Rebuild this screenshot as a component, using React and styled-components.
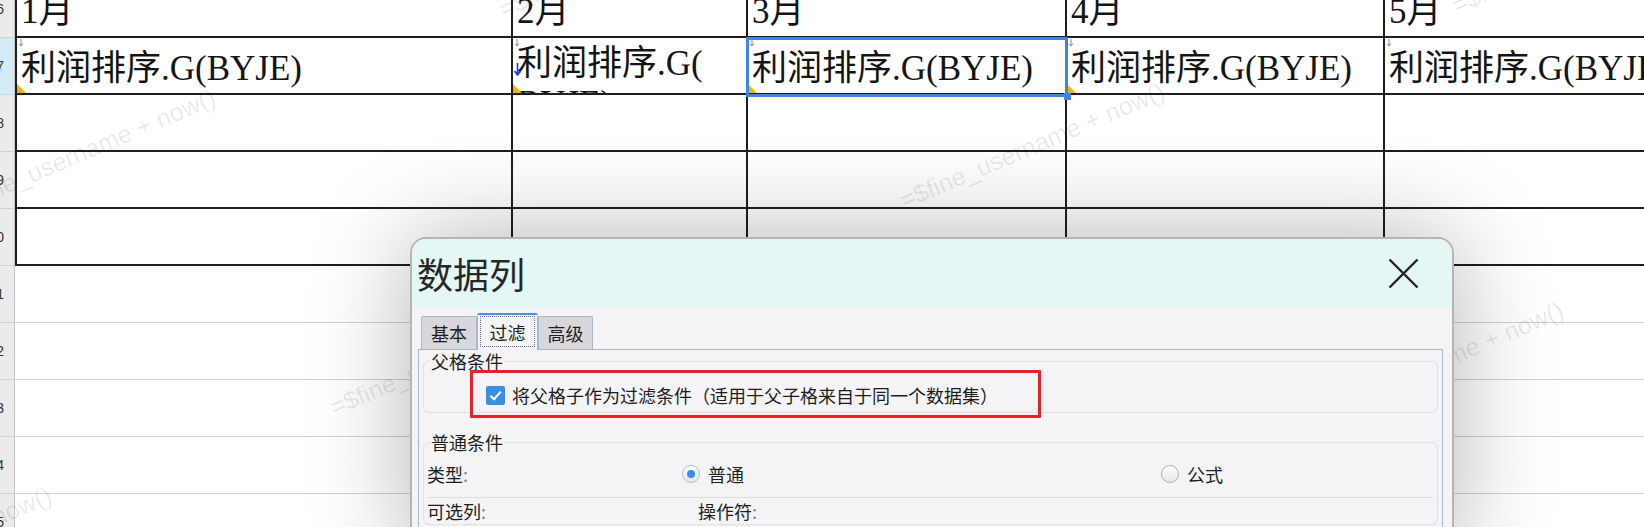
import React from 'react';
import styled, { createGlobalStyle, css } from 'styled-components';

const GlobalStyle = createGlobalStyle`
  html, body { margin: 0; padding: 0; background: #fff; }
  body { overflow: hidden; font-family: "Noto Sans CJK SC", sans-serif; }
  *, *::before, *::after { box-sizing: border-box; }
`;

const Screen = styled.div`
  position: relative;
  width: 1644px;
  height: 527px;
  overflow: hidden;
  background: #fff;
`;

/* ---------- spreadsheet ---------- */

const Sheet = styled.div`
  display: grid;
  grid-template-columns: 15px 498px 235px 319px 318px 420px;
  grid-auto-rows: 57px;
  margin-top: -19px;
`;

const RowHead = styled.div`
  display: flex;
  align-items: center;
  justify-content: flex-end;
  padding-right: 10px;
  overflow: hidden;
  background: ${(p) => (p.$active ? '#d3ecf8' : '#ebebeb')};
  border-right: 1px solid #c4c4c4;
  border-bottom: 1px solid #d2d2d2;
  font: 14px/1 "Liberation Sans", sans-serif;
  color: #333;
`;

const Cell = styled.div`
  position: relative;
  border-right: 2px solid #1e1e1e;
  border-bottom: 2px solid #1e1e1e;
  border-left: ${(p) => (p.$first ? '2px solid #1e1e1e' : 'none')};
  ${(p) =>
    p.$selected &&
    css`
      &::after {
        content: '';
        position: absolute;
        left: -2px;
        top: -1px;
        right: -3px;
        bottom: -4px;
        border: 3px solid #3a85e6;
        pointer-events: none;
        z-index: 2;
      }
      &::before {
        content: '';
        position: absolute;
        right: -6px;
        bottom: -7px;
        width: 7px;
        height: 7px;
        background: #3a85e6;
        z-index: 3;
      }
    `}
`;

const CellText = styled.div`
  height: 100%;
  display: flex;
  align-items: ${(p) => (p.$top ? 'flex-start' : 'flex-end')};
  padding: ${(p) => (p.$top ? '6px 0 0 4px' : '0 0 4px 4px')};
  overflow: hidden;
  white-space: nowrap;
  font: 35px/40px "Liberation Serif", "Noto Sans CJK SC", serif;
  color: #141414;
`;

const PlainRow = styled.div`
  grid-column: 2 / -1;
  border-bottom: 1px solid #d0d0d0;
`;

const ExpandMark = styled.svg`
  position: absolute;
  left: 1px;
  top: 1px;
`;

const BlueArrow = styled.svg`
  position: absolute;
  left: 1px;
  top: 25px;
`;

const CornerMark = styled.span`
  position: absolute;
  left: 0;
  bottom: 0;
  width: 9px;
  height: 9px;
  background: #f4b400;
  clip-path: polygon(0 0, 0 100%, 100% 100%);
`;

const Watermark = styled.span`
  position: absolute;
  left: ${(p) => p.$x}px;
  top: ${(p) => p.$y - 25}px;
  font: 25px/25px "Liberation Sans", sans-serif;
  color: rgba(0, 0, 0, 0.09);
  white-space: nowrap;
  transform: rotate(-23deg);
  transform-origin: 0 100%;
  pointer-events: none;
`;

/* ---------- dialog ---------- */

const Dialog = styled.section`
  position: absolute;
  left: 410px;
  top: 237px;
  width: 1044px;
  height: 320px;
  display: flex;
  flex-direction: column;
  border: 2px solid #b5b5b5;
  border-bottom: none;
  border-radius: 16px 16px 0 0;
  background: #f4f4f6;
  box-shadow: 0 0 100px rgba(0, 0, 0, 0.3);
  overflow: hidden;
  font-family: "Noto Sans CJK SC", sans-serif;
  color: #1d1d1d;
  z-index: 5;
`;

const TitleBar = styled.header`
  flex: 0 0 68px;
  display: flex;
  align-items: center;
  justify-content: space-between;
  padding: 0 33px 0 5px;
  background: #e3f7f4;
`;

const Title = styled.h1`
  margin: 0;
  font-size: 36px;
  font-weight: 400;
  line-height: 1;
  color: #262626;
`;

const CloseButton = styled.button`
  width: 31px;
  height: 31px;
  padding: 0;
  border: 0;
  background: none;
  svg { display: block; }
`;

const Body = styled.div`
  flex: 1;
  display: flex;
  flex-direction: column;
  padding: 6px 9px 0 6px;
`;

const TabStrip = styled.div`
  display: flex;
  align-items: flex-end;
  height: 36px;
  margin-left: 3px;
`;

const Tab = styled.div`
  position: relative;
  width: ${(p) => p.$w}px;
  display: flex;
  align-items: stretch;
  justify-content: center;
  font-size: 18px;
  color: #1d1d1d;
  border: 1px solid #a8b7ca;
  border-bottom: none;
  border-radius: 2px 2px 0 0;
  ${(p) =>
    p.$active
      ? css`
          height: 37px;
          margin-bottom: -1px;
          padding: 1px 2px 3px;
          border-top: 2px solid #4a90e2;
          background: #f4f4f6;
          z-index: 1;
        `
      : css`
          height: 33px;
          align-items: center;
          background: #d8d8dc;
        `}
`;

const TabFocus = styled.span`
  flex: 1;
  display: flex;
  align-items: center;
  justify-content: center;
  border: 1px dotted #6b6fa8;
`;

const Panel = styled.div`
  flex: 1;
  padding: 0 4px;
  border: 1px solid #a8b7ca;
  border-bottom: none;
`;

const Group = styled.fieldset`
  margin: ${(p) => p.$gap}px 0 0;
  padding: 0;
  min-width: 0;
  border: 1px solid #e0e0e5;
  border-radius: 6px;
`;

const GroupTitle = styled.legend`
  margin-left: 6px;
  padding: 0 1px;
  font-size: 18px;
  line-height: 22px;
  color: #1d1d1d;
`;

const GroupBody = styled.div`
  padding: ${(p) => p.$pad};
`;

const CheckRow = styled.label`
  position: relative;
  display: flex;
  align-items: center;
  gap: 7px;
  height: 26px;
  font-size: 18px;
`;

const CheckBox = styled.span`
  width: 19px;
  height: 19px;
  border-radius: 2px;
  background: #3b8ee2;
  display: flex;
  align-items: center;
  justify-content: center;
`;

const Highlight = styled.span`
  position: absolute;
  left: -16px;
  top: -12px;
  width: 571px;
  height: 48px;
  border: 3px solid #e8202a;
  border-radius: 1px;
  pointer-events: none;
`;

const FormRow = styled.div`
  display: flex;
  align-items: center;
  height: 26px;
  font-size: 18px;
`;

const FieldLabel = styled.span`
  width: ${(p) => p.$w}px;
  flex: none;
`;

const Colon = styled.span`
  color: #8e74b0;
`;

const RadioOption = styled.label`
  display: flex;
  align-items: center;
  gap: 8px;
  width: ${(p) => p.$w}px;
  flex: none;
`;

const RadioDot = styled.span`
  position: relative;
  width: 18px;
  height: 18px;
  border-radius: 50%;
  border: 1px solid ${(p) => (p.$checked ? '#a9bfd6' : '#b0b0b0')};
  background: linear-gradient(#ffffff, #e6e6e8);
  ${(p) =>
    p.$checked &&
    css`
      &::after {
        content: '';
        position: absolute;
        left: 4px;
        top: 4px;
        width: 8px;
        height: 8px;
        border-radius: 50%;
        background: #3d8ee6;
      }
    `}
`;

const Divider = styled.div`
  height: 1px;
  margin-top: 10px;
  background: #dcdce1;
`;

/* ---------- data ---------- */

const months = ['1月', '2月', '3月', '4月', '5月'];
const marks = [
  [-43, 219],
  [336, 420],
  [906, 213],
  [1458, 18],
  [1305, 432],
  [-207, 617],
  [505, 22],
];

const GrayArrow = () => (
  <ExpandMark width="6" height="8" viewBox="0 0 6 8">
    <path d="M3 0 V7 M0.8 4.6 L3 7 L5.2 4.6" stroke="#8a8a8a" strokeWidth="1" fill="none" />
  </ExpandMark>
);

const FieldCell = ({ first, selected, children, wrap, blue, corner = true }) => (
  <Cell $first={first} $selected={selected}>
    <CellText $top={wrap}>
      <span>{children}</span>
    </CellText>
    <GrayArrow />
    {blue && (
      <BlueArrow width="7" height="13" viewBox="0 0 7 13">
        <path d="M3.5 0 V12 M0.5 8 L3.5 12 L6.5 8" stroke="#1437ff" strokeWidth="1.6" fill="none" />
      </BlueArrow>
    )}
    {corner && <CornerMark />}
  </Cell>
);

export default function App() {
  return (
    <Screen>
      <GlobalStyle />
      <Sheet>
        <RowHead>6</RowHead>
        {months.map((m, i) => (
          <Cell key={m} $first={i === 0}>
            <CellText>
              <span>{m}</span>
            </CellText>
          </Cell>
        ))}

        <RowHead $active>7</RowHead>
        <FieldCell first>利润排序.G(BYJE)</FieldCell>
        <FieldCell wrap blue>
          利润排序.G(
          <br />
          BYJE)
        </FieldCell>
        <FieldCell selected>利润排序.G(BYJE)</FieldCell>
        <FieldCell>利润排序.G(BYJE)</FieldCell>
        <FieldCell corner={false}>利润排序.G(BYJE)</FieldCell>

        {[8, 9, 10].map((n) => (
          <React.Fragment key={n}>
            <RowHead>{n}</RowHead>
            {months.map((m, i) => (
              <Cell key={m} $first={i === 0} />
            ))}
          </React.Fragment>
        ))}

        {[11, 12, 13, 14, 15].map((n) => (
          <React.Fragment key={n}>
            <RowHead>{n}</RowHead>
            <PlainRow />
          </React.Fragment>
        ))}
      </Sheet>

      {marks.map(([x, y]) => (
        <Watermark key={`${x}-${y}`} $x={x} $y={y}>
          =$fine_username + now()
        </Watermark>
      ))}

      <Dialog>
        <TitleBar>
          <Title>数据列</Title>
          <CloseButton aria-label="关闭">
            <svg width="31" height="31" viewBox="0 0 31 31">
              <path d="M1.5 1.5 L29.5 29.5 M29.5 1.5 L1.5 29.5" stroke="#222" strokeWidth="2.4" />
            </svg>
          </CloseButton>
        </TitleBar>
        <Body>
          <TabStrip>
            <Tab $w={56}>基本</Tab>
            <Tab $w={61} $active>
              <TabFocus>过滤</TabFocus>
            </Tab>
            <Tab $w={55}>高级</Tab>
          </TabStrip>
          <Panel>
            <Group $gap={0}>
              <GroupTitle>父格条件</GroupTitle>
              <GroupBody $pad="10px 0 4px 62px">
                <CheckRow>
                  <CheckBox>
                    <svg width="15" height="15" viewBox="0 0 15 15">
                      <path d="M2.5 7.8 L6 11.2 L12.8 3.6" stroke="#fff" strokeWidth="2" fill="none" />
                    </svg>
                  </CheckBox>
                  将父格子作为过滤条件（适用于父子格来自于同一个数据集）
                  <Highlight />
                </CheckRow>
              </GroupBody>
            </Group>
            <Group $gap={18}>
              <GroupTitle>普通条件</GroupTitle>
              <GroupBody $pad="8px 4px 0 3px">
                <FormRow>
                  <FieldLabel $w={255}>
                    类型<Colon>:</Colon>
                  </FieldLabel>
                  <RadioOption $w={479}>
                    <RadioDot $checked />
                    普通
                  </RadioOption>
                  <RadioOption $w={200}>
                    <RadioDot />
                    公式
                  </RadioOption>
                </FormRow>
                <Divider />
                <FormRow>
                  <FieldLabel $w={271}>
                    可选列<Colon>:</Colon>
                  </FieldLabel>
                  <FieldLabel $w={200}>
                    操作符<Colon>:</Colon>
                  </FieldLabel>
                </FormRow>
              </GroupBody>
            </Group>
          </Panel>
        </Body>
      </Dialog>
    </Screen>
  );
}
